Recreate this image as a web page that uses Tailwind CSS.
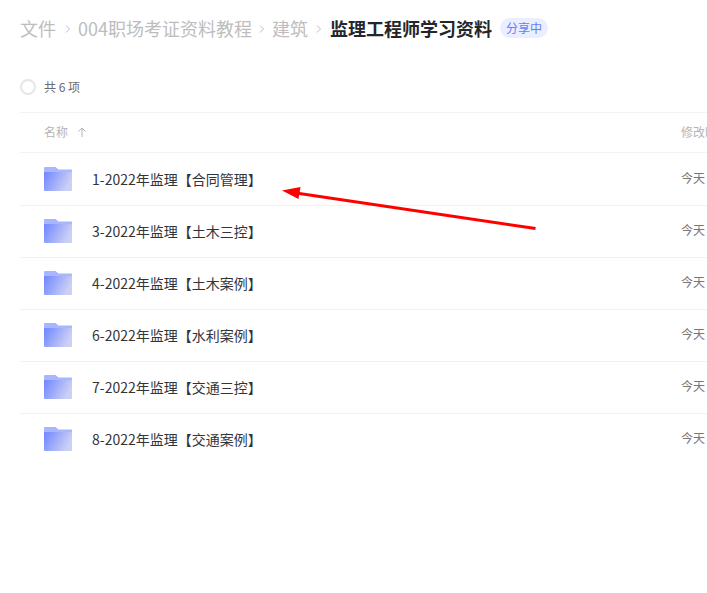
<!DOCTYPE html>
<html lang="zh-CN">
<head>
    <meta charset="UTF-8">
    <title>监理工程师学习资料</title>
    <script src="https://cdn.jsdelivr.net/npm/@tailwindcss/browser@4"></script>
</head>
<body class="relative w-[707px] h-[593px] overflow-hidden bg-white font-['Noto_Sans_CJK_SC','Liberation_Sans',sans-serif]">

    <!-- Breadcrumb -->
    <div class="h-[59px] pl-5 pb-[3px] flex items-center text-[18px] text-[#bdbdc0] whitespace-nowrap">
        <span>文件</span>
        <span class="w-[22px] pt-[2px] flex justify-center"><svg width="5" height="8" viewBox="0 0 5 8" fill="none" stroke="#bdbdc0" stroke-width="1"><path d="M1 .5l3.500 3.500-3.500 3.500"/></svg></span>
        <span>004职场考证资料教程</span>
        <span class="w-[20px] pt-[2px] flex justify-center"><svg width="5" height="8" viewBox="0 0 5 8" fill="none" stroke="#bdbdc0" stroke-width="1"><path d="M1 .5l3.500 3.500-3.500 3.500"/></svg></span>
        <span>建筑</span>
        <span class="w-[22px] pt-[2px] flex justify-center"><svg width="5" height="8" viewBox="0 0 5 8" fill="none" stroke="#bdbdc0" stroke-width="1"><path d="M1 .5l3.500 3.500-3.500 3.500"/></svg></span>
        <span class="font-bold text-[#25262b]">监理工程师学习资料</span>
        <span class="ml-2 w-[48px] h-5 rounded-full bg-[#ebeeff] text-[#637dff] text-xs leading-5 text-center">分享中</span>
    </div>

    <!-- Select all -->
    <div class="h-[54px] ml-5 pt-[2px] flex items-center gap-2 border-b border-[#f2f2f3] text-xs text-[#6a6a72]">
        <span class="w-4 h-4 rounded-full border-2 border-[#e6e6e8]"></span>
        <span>共 6 项</span>
    </div>

    <!-- Table header -->
    <div class="h-10 ml-5 pl-6 pb-[2px] flex items-center border-b border-[#f2f2f3] text-xs text-[#b4b4b8]">
        <span class="w-[637px] flex items-center gap-[9px]">
            名称
            <svg width="10" height="10" viewBox="0 0 10 10" fill="none" stroke="#b4b4b8" stroke-width="1"><path d="M5 10V1M1.5 4.500L5 1l3.500 3.500"/></svg>
        </span>
        <span class="w-[26px] overflow-hidden whitespace-nowrap shrink-0">修改时间</span>
    </div>

    <!-- Rows -->
    <div class="ml-5">
        <div class="h-[53px] pl-6 flex items-center border-b border-[#f2f2f3]">
            <svg class="w-7 h-6 shrink-0" viewBox="0 0 28 24"><use href="#folder"/></svg>
            <span class="w-[609px] pl-5 text-sm text-[#33343a] whitespace-nowrap">1-2022年监理【合同管理】</span>
            <span class="pb-[2px] text-xs text-[#77777d] whitespace-nowrap">今天</span>
        </div>
        <div class="h-[52px] pl-6 pb-px flex items-center border-b border-[#f2f2f3]">
            <svg class="w-7 h-6 shrink-0" viewBox="0 0 28 24"><use href="#folder"/></svg>
            <span class="w-[609px] pl-5 text-sm text-[#33343a] whitespace-nowrap">3-2022年监理【土木三控】</span>
            <span class="pb-[2px] text-xs text-[#77777d] whitespace-nowrap">今天</span>
        </div>
        <div class="h-[52px] pl-6 pb-px flex items-center border-b border-[#f2f2f3]">
            <svg class="w-7 h-6 shrink-0" viewBox="0 0 28 24"><use href="#folder"/></svg>
            <span class="w-[609px] pl-5 text-sm text-[#33343a] whitespace-nowrap">4-2022年监理【土木案例】</span>
            <span class="pb-[2px] text-xs text-[#77777d] whitespace-nowrap">今天</span>
        </div>
        <div class="h-[52px] pl-6 pb-px flex items-center border-b border-[#f2f2f3]">
            <svg class="w-7 h-6 shrink-0" viewBox="0 0 28 24"><use href="#folder"/></svg>
            <span class="w-[609px] pl-5 text-sm text-[#33343a] whitespace-nowrap">6-2022年监理【水利案例】</span>
            <span class="pb-[2px] text-xs text-[#77777d] whitespace-nowrap">今天</span>
        </div>
        <div class="h-[52px] pl-6 pb-px flex items-center border-b border-[#f2f2f3]">
            <svg class="w-7 h-6 shrink-0" viewBox="0 0 28 24"><use href="#folder"/></svg>
            <span class="w-[609px] pl-5 text-sm text-[#33343a] whitespace-nowrap">7-2022年监理【交通三控】</span>
            <span class="pb-[2px] text-xs text-[#77777d] whitespace-nowrap">今天</span>
        </div>
        <div class="h-[51px] pl-6 pb-px flex items-center">
            <svg class="w-7 h-6 shrink-0" viewBox="0 0 28 24"><use href="#folder"/></svg>
            <span class="w-[609px] pl-5 text-sm text-[#33343a] whitespace-nowrap">8-2022年监理【交通案例】</span>
            <span class="pb-[2px] text-xs text-[#77777d] whitespace-nowrap">今天</span>
        </div>
    </div>

    <!-- Shared folder icon -->
    <svg width="0" height="0" class="absolute">
        <defs>
            <linearGradient id="folderBody" x1="0" y1="0" x2="1" y2="0.35">
                <stop offset="0" stop-color="#6f86ff"/>
                <stop offset="1" stop-color="#ccd0f5"/>
            </linearGradient>
            <symbol id="folder" viewBox="0 0 28 24">
                <path d="M1 0h10.500l3 2.500H27a1 1 0 0 1 1 1V8H0V1a1 1 0 0 1 1-1z" fill="#a9b6ff"/>
                <path d="M1 5h26a1 1 0 0 1 1 1v17a1 1 0 0 1-1 1H1a1 1 0 0 1-1-1V6a1 1 0 0 1 1-1z" fill="url(#folderBody)"/>
            </symbol>
        </defs>
    </svg>

    <!-- Red annotation arrow -->
    <svg class="absolute left-0 top-0" width="707" height="593" fill="none">
        <path d="M535.500 228.500L296 193" stroke="#ff0000" stroke-width="3"/>
        <path d="M282 190.500L300.500 187L298.500 199z" fill="#ff0000"/>
    </svg>
</body>
</html>
